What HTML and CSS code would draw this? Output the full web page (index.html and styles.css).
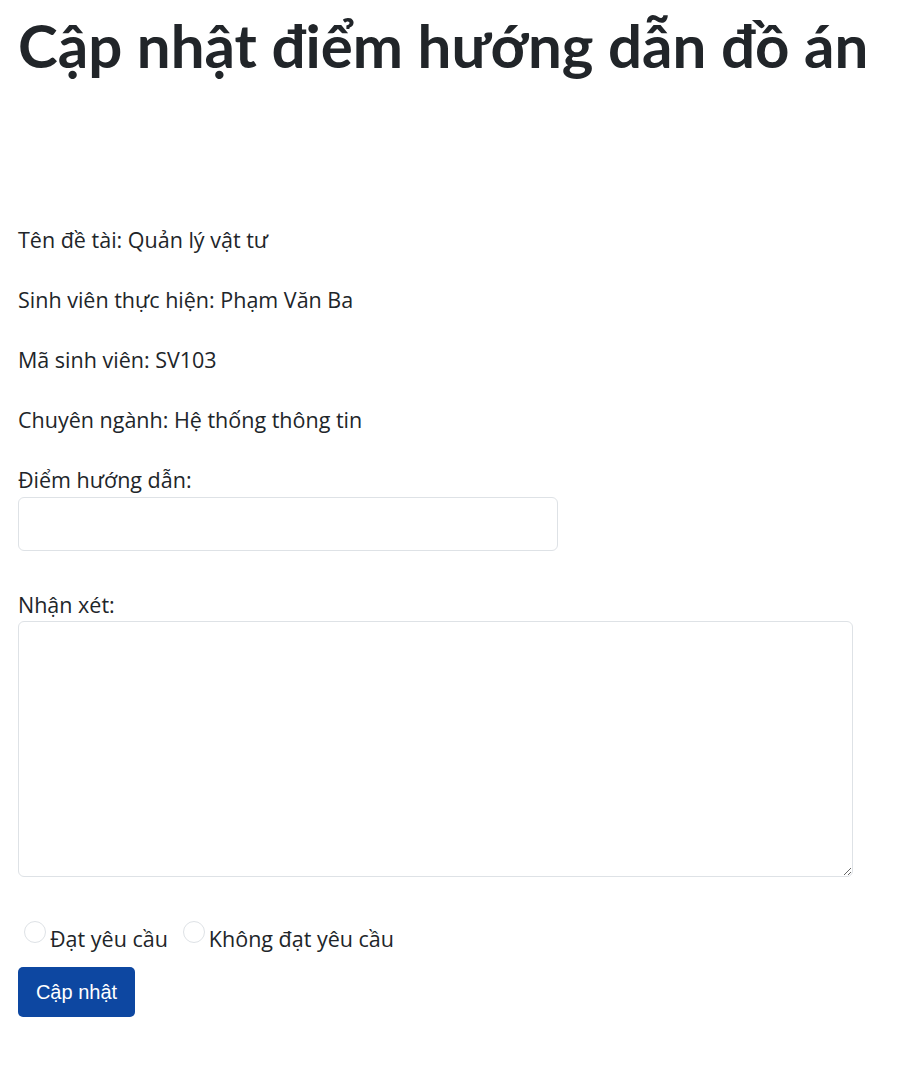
FILE: index.html
```html
<!DOCTYPE html>
<html lang="vi">
<head>
<meta charset="utf-8">
<title>Cập nhật điểm hướng dẫn đồ án</title>
<link rel="stylesheet" href="styles.css">
</head>
<body>
<main class="page">
  <h1 class="title">Cập nhật điểm hướng dẫn đồ án</h1>
  <section class="info">
    <p class="info-row">Tên đề tài: Quản lý vật tư</p>
    <p class="info-row">Sinh viên thực hiện: Phạm Văn Ba</p>
    <p class="info-row">Mã sinh viên: SV103</p>
    <p class="info-row">Chuyên ngành: Hệ thống thông tin</p>
  </section>
  <form class="form">
    <label class="field-label" for="diem">Điểm hướng dẫn:</label>
    <input class="input" id="diem" type="text">
    <label class="field-label label-gap" for="nhanxet">Nhận xét:</label>
    <textarea class="textarea" id="nhanxet"></textarea>
    <div class="radios">
      <label class="radio"><input type="radio" name="kq" class="radio-input"><span>Đạt yêu cầu</span></label>
      <label class="radio"><input type="radio" name="kq" class="radio-input"><span>Không đạt yêu cầu</span></label>
    </div>
    <button type="button" class="btn">Cập nhật</button>
  </form>
</main>
</body>
</html>
```
FILE: styles.css
```css
* { box-sizing: border-box; }
body {
  margin: 0;
  background: #fff;
  color: #212529;
  font-family: "Open Sans", "Noto Sans", sans-serif;
  font-size: 21.5px;
}
.page {
  padding: 9px 18px 40px;
}
.title {
  margin: 0;
  font-family: "Lato", "Open Sans", sans-serif;
  font-size: 60px;
  font-weight: 700;
  line-height: 72px;
  white-space: nowrap;
}
.info {
  margin-top: 129px;
}
.info-row {
  margin: 0;
  line-height: 30px;
  padding: 15px 0;
}
.form {
  display: flex;
  flex-direction: column;
  align-items: flex-start;
}
.field-label {
  line-height: 30px;
  margin-top: 15px;
}
.input {
  margin-top: 2px;
  width: 540px;
  height: 54px;
  border: 1px solid #dee2e6;
  border-radius: 6px;
  font-size: 20px;
  padding: 6px 12px;
}
.label-gap { margin-top: 39px; }
.textarea {
  margin-top: 1px;
  width: 835px;
  height: 256px;
  border: 1px solid #dee2e6;
  border-radius: 6px;
  font-size: 20px;
  padding: 6px 12px;
  resize: vertical;
}
.radios {
  display: flex;
  gap: 9px;
  margin-top: 47px;
}
.radio {
  display: flex;
  align-items: center;
  line-height: 30px;
}
.radio-input {
  appearance: none;
  width: 22px;
  height: 22px;
  margin: 0 4px 0 6px;
  border: 1px solid #dee2e6;
  border-radius: 50%;
  background: #fff;
  position: relative;
  top: -7px;
}
.btn {
  margin-top: 13px;
  width: 117px;
  height: 50px;
  background: #0d47a1;
  color: #fff;
  border: 0;
  border-radius: 5px;
  font-family: "Liberation Sans", Arial, sans-serif;
  font-size: 20px;
}
```
